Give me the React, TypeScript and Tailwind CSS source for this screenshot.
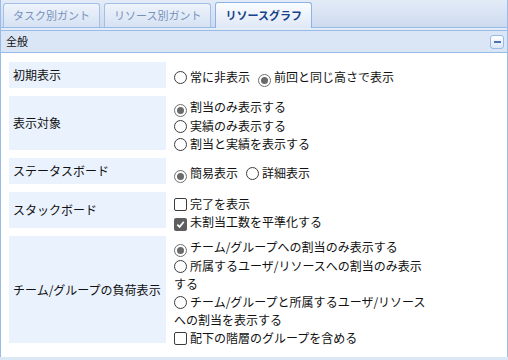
import React from "react";

const font = { fontFamily: '"Noto Sans CJK JP", "Noto Sans", sans-serif' };

function Radio({ checked }: { checked?: boolean }) {
  return (
    <span
      className={`inline-flex items-center justify-center align-[-2px] w-[13px] h-[13px] rounded-full border bg-white mr-[3px] ${
        checked ? "border-[#6f6f6f]" : "border-[#3c3c3c]"
      }`}
    >
      {checked && <span className="w-[7px] h-[7px] rounded-full bg-[#6a6a6a]" />}
    </span>
  );
}

function Check({ checked }: { checked?: boolean }) {
  if (checked) {
    return (
      <span className="inline-flex items-center justify-center align-[-2px] w-[13px] h-[13px] rounded-[2px] bg-[#5e5e5e] mr-[3px]">
        <svg width="9" height="9" viewBox="0 0 9 9">
          <path d="M1.3 4.6 L3.6 6.9 L7.8 1.8" fill="none" stroke="#fff" strokeWidth="1.7" />
        </svg>
      </span>
    );
  }
  return (
    <span className="inline-block align-[-2px] w-[13px] h-[13px] rounded-[2px] border border-[#3c3c3c] bg-white mr-[3px]" />
  );
}

const tabs = [
  { label: "タスク別ガント", active: false },
  { label: "リソース別ガント", active: false },
  { label: "リソースグラフ", active: true },
];

function Row({
  label,
  height,
  children,
}: {
  label: string;
  height: string;
  children: React.ReactNode;
}) {
  return (
    <div className={`flex items-center gap-[8px] ${height}`}>
      <div className="w-[157px] h-full shrink-0 flex items-center pl-[4px] bg-[#eaf2fd] text-[12px] text-[#111]">
        {label}
      </div>
      <div className="w-[256px] mt-[5px] text-[12px] leading-[18px] text-[#111]">{children}</div>
    </div>
  );
}

export default function App() {
  return (
    <div className="w-[508px] h-[360px] overflow-hidden bg-white" style={font}>
      {/* tab strip */}
      <div className="h-[28px] flex items-end gap-[4px] pl-[2px] border-x border-b border-[#99bbe8] bg-linear-to-b from-[#e3ebf7] to-[#cedbef]">
        {tabs.map((t) =>
          t.active ? (
            <div
              key={t.label}
              className="h-[26px] px-[9px] flex items-center rounded-t-[3px] border-x border-t border-[#8db2e3] bg-linear-to-b from-[#fbfdff] to-[#dfe8f6] text-[11px] font-bold text-[#15428b] -mb-px"
            >
              {t.label}
            </div>
          ) : (
            <div
              key={t.label}
              className="h-[24px] px-[9px] flex items-center rounded-t-[3px] border-x border-t border-[#a3bfe6] bg-linear-to-b from-[#eef3fb] to-[#d6e2f3] text-[11px] text-[#7591bd]"
            >
              {t.label}
            </div>
          )
        )}
      </div>
      <div className="h-[2px] border-x border-[#99bbe8] bg-[#e4ecf8]" />

      {/* panel header */}
      <div className="h-[23px] flex items-center justify-between pl-[5px] pr-[3px] border border-[#99bbe8] bg-[#dae6f6] text-[11px] text-[#111]">
        <span>全般</span>
        <span className="w-[14px] h-[14px] flex items-center justify-center rounded-[3px] border border-[#99bbe8] bg-linear-to-b from-white to-[#dbe6f6]">
          <span className="w-[7px] h-[2px] bg-[#4a74b5]" />
        </span>
      </div>

      {/* body */}
      <div className="h-[304px] border-x border-[#99bbe8] pl-[8px] pt-[9px] flex flex-col gap-[8px]">
        <Row label="初期表示" height="h-[26px]">
          <div>
            <span className="mr-[8px]">
              <Radio />
              常に非表示
            </span>
            <span>
              <Radio checked />
              前回と同じ高さで表示
            </span>
          </div>
        </Row>
        <Row label="表示対象" height="h-[54px]">
          <div>
            <Radio checked />
            割当のみ表示する
          </div>
          <div>
            <Radio />
            実績のみ表示する
          </div>
          <div>
            <Radio />
            割当と実績を表示する
          </div>
        </Row>
        <Row label="ステータスボード" height="h-[26px]">
          <div>
            <span className="mr-[8px]">
              <Radio checked />
              簡易表示
            </span>
            <span>
              <Radio />
              詳細表示
            </span>
          </div>
        </Row>
        <Row label="スタックボード" height="h-[36px]">
          <div>
            <Check />
            完了を表示
          </div>
          <div>
            <Check checked />
            未割当工数を平準化する
          </div>
        </Row>
        <Row label="チーム/グループの負荷表示" height="h-[107px]">
          <div>
            <Radio checked />
            チーム/グループへの割当のみ表示する
          </div>
          <div>
            <Radio />
            所属するユーザ/リソースへの割当のみ表示する
          </div>
          <div>
            <Radio />
            チーム/グループと所属するユーザ/リソースへの割当を表示する
          </div>
          <div>
            <Check />
            配下の階層のグループを含める
          </div>
        </Row>
      </div>
      <div className="h-[3px] bg-[#dde8f6]" />
    </div>
  );
}
